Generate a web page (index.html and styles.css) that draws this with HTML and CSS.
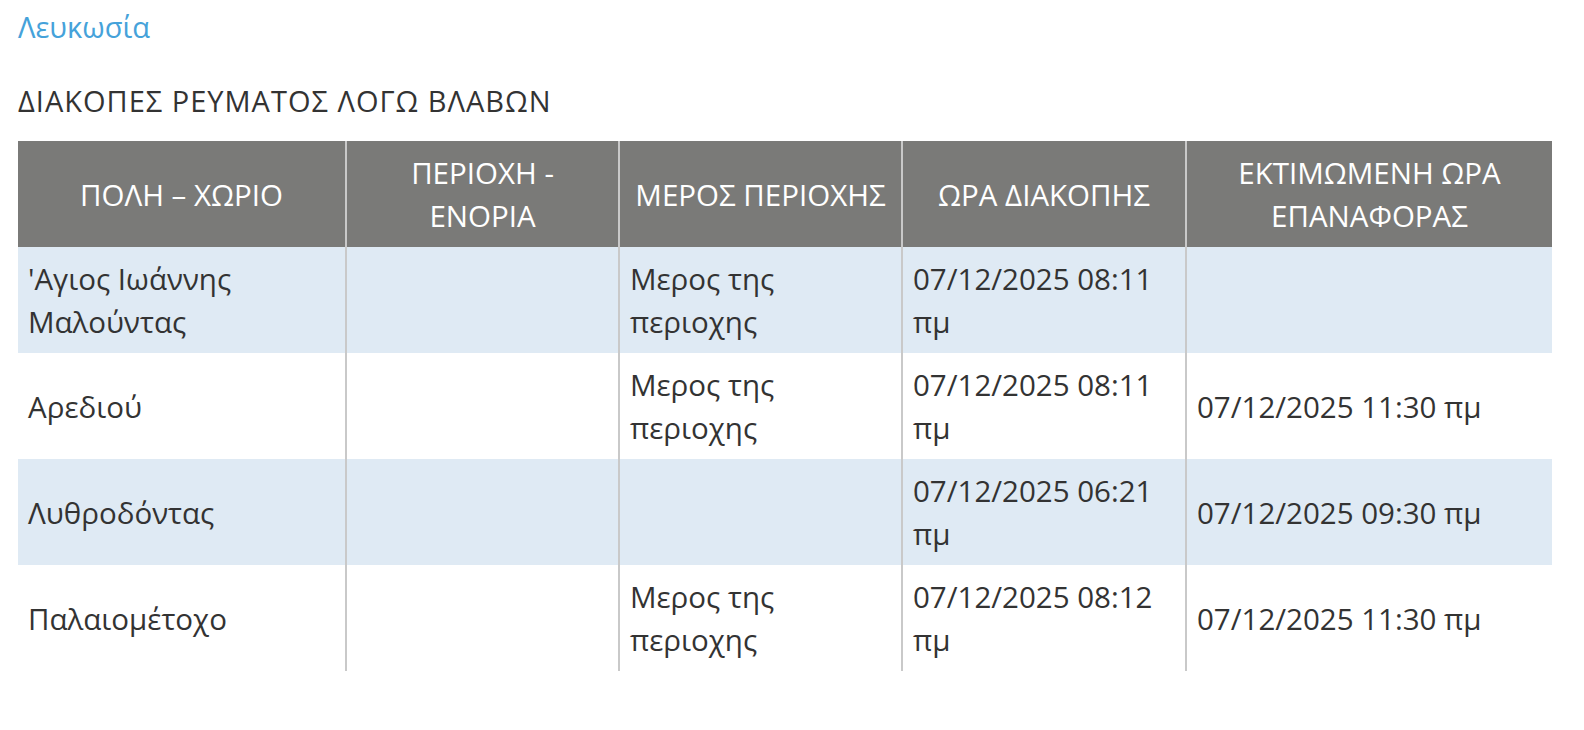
FILE: index.html
```html
<!DOCTYPE html>
<html lang="el">
<head>
<meta charset="utf-8">
<title>Διακοπές ρεύματος</title>
<link rel="stylesheet" href="styles.css">
</head>
<body>
<main class="page">
  <a class="region-link" href="#">Λευκωσία</a>
  <h1 class="title">ΔΙΑΚΟΠΕΣ ΡΕΥΜΑΤΟΣ ΛΟΓΩ ΒΛΑΒΩΝ</h1>
  <table class="outages">
    <colgroup>
      <col class="c1"><col class="c2"><col class="c3"><col class="c4"><col class="c5">
    </colgroup>
    <thead>
      <tr>
        <th>ΠΟΛΗ – ΧΩΡΙΟ</th>
        <th>ΠΕΡΙΟΧΗ - ΕΝΟΡΙΑ</th>
        <th>ΜΕΡΟΣ ΠΕΡΙΟΧΗΣ</th>
        <th>ΩΡΑ ΔΙΑΚΟΠΗΣ</th>
        <th>ΕΚΤΙΜΩΜΕΝΗ ΩΡΑ ΕΠΑΝΑΦΟΡΑΣ</th>
      </tr>
    </thead>
    <tbody>
      <tr class="alt">
        <td>'Αγιος Ιωάννης Μαλούντας</td>
        <td></td>
        <td>Μερος της περιοχης</td>
        <td>07/12/2025 08:11 πμ</td>
        <td></td>
      </tr>
      <tr>
        <td>Αρεδιού</td>
        <td></td>
        <td>Μερος της περιοχης</td>
        <td>07/12/2025 08:11 πμ</td>
        <td>07/12/2025 11:30 πμ</td>
      </tr>
      <tr class="alt">
        <td>Λυθροδόντας</td>
        <td></td>
        <td></td>
        <td>07/12/2025 06:21 πμ</td>
        <td>07/12/2025 09:30 πμ</td>
      </tr>
      <tr>
        <td>Παλαιομέτοχο</td>
        <td></td>
        <td>Μερος της περιοχης</td>
        <td>07/12/2025 08:12 πμ</td>
        <td>07/12/2025 11:30 πμ</td>
      </tr>
    </tbody>
  </table>
</main>
</body>
</html>
```
FILE: styles.css
```css
html, body {
  margin: 0;
  padding: 0;
  background: #ffffff;
}

body {
  font-family: "Open Sans", "Noto Sans", "DejaVu Sans", sans-serif;
  color: #333333;
}

.page {
  padding: 7px 32px 40px 18px;
}

.region-link {
  display: block;
  font-size: 29px;
  line-height: 40px;
  color: #45a2da;
  text-decoration: none;
}

.title {
  margin: 34px 0 20px;
  font-size: 29px;
  line-height: 40px;
  letter-spacing: 1px;
  font-weight: normal;
  color: #333333;
}

.outages {
  width: 1534px;
  table-layout: fixed;
  border-collapse: separate;
  border-spacing: 0;
}

.c1 { width: 327px; }
.c2 { width: 273px; }
.c3 { width: 283px; }
.c4 { width: 284px; }
.c5 { width: 367px; }

.outages th,
.outages td {
  padding: 10px 10px;
  line-height: 43px;
  vertical-align: middle;
  border-left: 2px solid #c9c9c9;
}

.outages th:first-child,
.outages td:first-child {
  border-left: none;
}

.outages th {
  background: #7a7a78;
  color: #ffffff;
  font-weight: normal;
  font-size: 29.5px;
  text-align: center;
  height: 86px;
}

.outages td {
  font-size: 29.5px;
  text-align: left;
  height: 86px;
}

.outages tr.alt td {
  background: #dfeaf4;
}
```
